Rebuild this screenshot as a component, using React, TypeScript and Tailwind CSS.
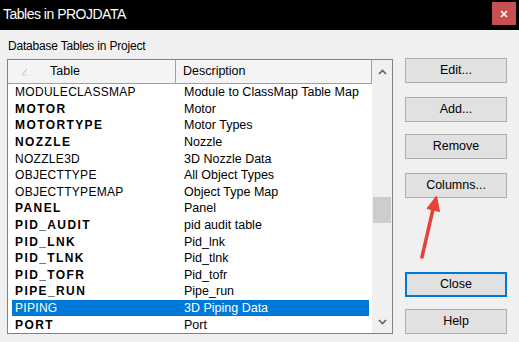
import React from "react";

const rows: { name: string; desc: string; bold: boolean }[] = [
  { name: "MODULECLASSMAP", desc: "Module to ClassMap Table Map", bold: false },
  { name: "MOTOR", desc: "Motor", bold: true },
  { name: "MOTORTYPE", desc: "Motor Types", bold: true },
  { name: "NOZZLE", desc: "Nozzle", bold: true },
  { name: "NOZZLE3D", desc: "3D Nozzle Data", bold: false },
  { name: "OBJECTTYPE", desc: "All Object Types", bold: false },
  { name: "OBJECTTYPEMAP", desc: "Object Type Map", bold: false },
  { name: "PANEL", desc: "Panel", bold: true },
  { name: "PID_AUDIT", desc: "pid audit table", bold: true },
  { name: "PID_LNK", desc: "Pid_lnk", bold: true },
  { name: "PID_TLNK", desc: "Pid_tlnk", bold: true },
  { name: "PID_TOFR", desc: "Pid_tofr", bold: true },
  { name: "PIPE_RUN", desc: "Pipe_run", bold: true },
  { name: "PIPING", desc: "3D Piping Data", bold: false },
  { name: "PORT", desc: "Port", bold: true },
];

function Btn({ label, className = "", primary = false }: { label: string; className?: string; primary?: boolean }) {
  return (
    <div
      className={`h-[25px] w-[102px] flex items-center justify-center text-[12.5px] text-black bg-[#e1e1e1] ${
        primary ? "border-2 border-[#0078d7]" : "border border-[#adadad]"
      } ${className}`}
    >
      {label}
    </div>
  );
}

export default function App() {
  return (
    <div className="relative w-[519px] h-[342px] overflow-hidden bg-[#f0f0f0] font-['Liberation_Sans',Arial,sans-serif]">
      {/* Title bar */}
      <div className="h-[30px] bg-black flex items-start justify-between">
        <span className="pl-[3px] pt-[6px] text-[14px] leading-[17px] tracking-[-0.5px] text-white">
          Tables in PROJDATA
        </span>
        <div className="mt-[2px] mr-[3px] w-[24px] h-[23px] bg-[#c75050] flex items-center justify-center">
          <svg width="8" height="8" viewBox="0 0 8 8">
            <path d="M1 1 L7 7 M7 1 L1 7" stroke="white" strokeWidth="1.6" />
          </svg>
        </div>
      </div>

      {/* Body */}
      <div className="flex">
        <div className="ml-[7px] w-[386px] flex flex-col pt-[9px]">
          <div className="pl-[1px] text-[12px] leading-[14px] tracking-[-0.2px] text-black">Database Tables in Project</div>
          <div className="mt-[6px] h-[275px] border border-[#828282] bg-white flex">
            <div className="w-[364px] flex flex-col">
              {/* Header */}
              <div className="h-[24px] flex bg-[#f4f4f4] border-b border-[#a0a0a0] text-[12.5px] text-black">
                <div className="w-[168px] border-r border-[#a0a0a0] flex items-center">
                  <svg width="8" height="8" viewBox="0 0 8 8" className="ml-[13px]">
                    <path d="M1 7 L6 1" stroke="#b8b8b8" strokeWidth="1" />
                    <path d="M1 7 L7 7" stroke="#d8d8d8" strokeWidth="1" />
                  </svg>
                  <span className="ml-[21px]">Table</span>
                </div>
                <div className="w-[196px] border-r border-[#a0a0a0] flex items-center pl-[7px]">
                  Description
                </div>
              </div>
              {/* Rows */}
              <div className="flex flex-col">
                {rows.map((r) => {
                  const sel = r.name === "PIPING";
                  return (
                    <div
                      key={r.name}
                      className={`ml-[4px] w-[357px] h-[16.6px] flex items-center leading-[16px] ${
                        sel ? "bg-[#0078d7] text-white" : "text-black"
                      }`}
                    >
                      <div
                        className={`w-[164px] pl-[3px] whitespace-nowrap text-[12px] ${
                          r.bold ? "font-bold tracking-[1.4px]" : "tracking-[0.3px]"
                        }`}
                      >
                        {r.name}
                      </div>
                      <div className="pl-[8px] whitespace-nowrap text-[12.5px]">{r.desc}</div>
                    </div>
                  );
                })}
              </div>
            </div>
            {/* Scrollbar */}
            <div className="w-[20px] bg-[#f0f0f0] flex flex-col items-center">
              <div className="h-[24px] flex items-center justify-center">
                <svg width="9" height="6" viewBox="0 0 9 6">
                  <path d="M1 5 L4.5 1.5 L8 5" fill="none" stroke="#606060" strokeWidth="1.6" />
                </svg>
              </div>
              <div className="mt-[113px] w-[18px] h-[26px] bg-[#cdcdcd]" />
              <div className="flex-1" />
              <div className="h-[22px] flex items-center justify-center">
                <svg width="9" height="6" viewBox="0 0 9 6">
                  <path d="M1 1 L4.5 4.5 L8 1" fill="none" stroke="#606060" strokeWidth="1.6" />
                </svg>
              </div>
            </div>
          </div>
        </div>

        <div className="ml-[12px] flex flex-col">
          <Btn label="Edit..." className="mt-[28px]" />
          <Btn label="Add..." className="mt-[14px]" />
          <Btn label="Remove" className="mt-[12px]" />
          <Btn label="Columns..." className="mt-[14px]" />
          <Btn label="Close" className="mt-[74px]" primary />
          <Btn label="Help" className="mt-[12px]" />
        </div>
      </div>

      {/* Red annotation arrow */}
      <svg className="absolute left-0 top-0 pointer-events-none" width="519" height="342" viewBox="0 0 519 342">
        <path d="M422 257 L433.5 207" stroke="#e8403a" strokeWidth="3.5" strokeLinecap="round" />
        <path d="M436.5 196 L439.5 211.5 L427 208.5 Z" fill="#e8403a" stroke="#e8403a" strokeWidth="1" strokeLinejoin="round" />
      </svg>
    </div>
  );
}
